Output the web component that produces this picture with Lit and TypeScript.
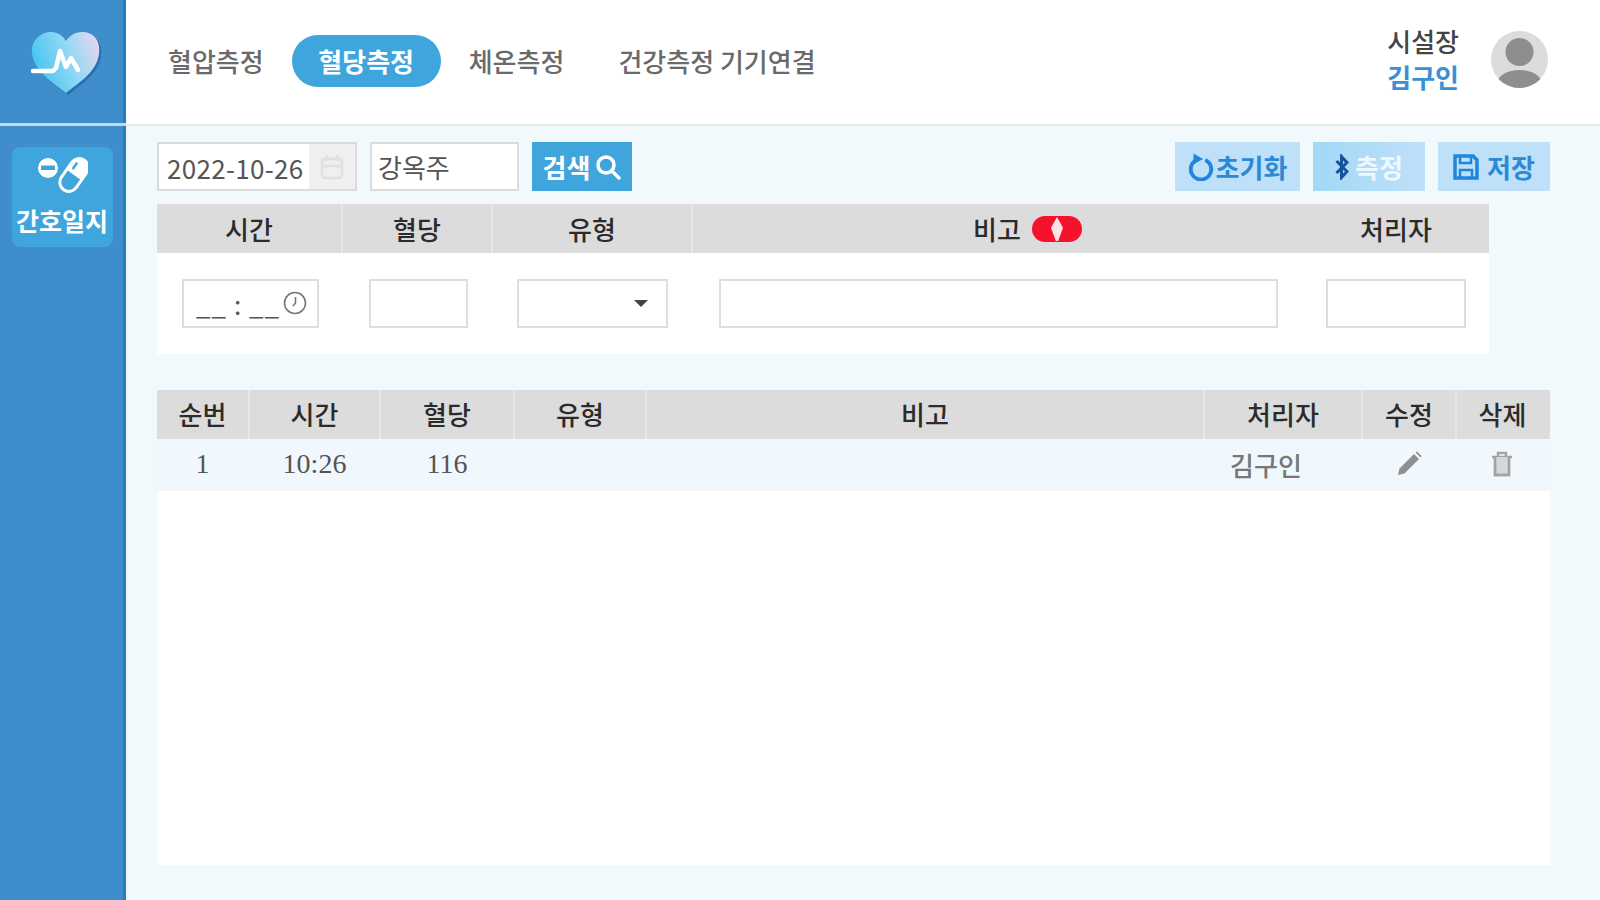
import { LitElement, html, css, svg } from "lit";
import { customElement } from "lit/decorators.js";

const formCols = ["시간", "혈당", "유형", "비고", "처리자"];
const tableCols = ["순번", "시간", "혈당", "유형", "비고", "처리자", "수정", "삭제"];

const heart = svg`<svg width="76" height="66" viewBox="0 0 76 66">
  <defs><linearGradient id="hg" x1="0" y1="0.55" x2="1" y2="0.2"><stop offset="0" stop-color="#42c4f1"/><stop offset="0.55" stop-color="#92d8f4"/><stop offset="1" stop-color="#e6d6f0"/></linearGradient></defs>
  <path d="M39 63 C28 54 7 42 5 23 C4 9 15 2 24 2 C31 2 36 6 39 11 C42 6 48 2 55 2 C66 2 74 10 72 24 C70 42 50 54 39 63Z" fill="#2a6fae" transform="translate(2 2)"/>
  <path d="M39 63 C28 54 7 42 5 23 C4 9 15 2 24 2 C31 2 36 6 39 11 C42 6 48 2 55 2 C66 2 74 10 72 24 C70 42 50 54 39 63Z" fill="url(#hg)"/>
  <path d="M6 41 H26 L29 38 L33 21 L39 37 L44 28 L51 40" fill="none" stroke="#fff" stroke-width="4.5" stroke-linejoin="round" stroke-linecap="round"/>
</svg>`;

const pill = svg`<svg class="pillico" width="50" height="36" viewBox="0 0 50 36">
  <circle cx="10" cy="11" r="10" fill="#fff"/>
  <rect x="3" y="8.5" width="14" height="4.5" fill="#3ea5dd"/>
  <g transform="rotate(-55 36 18)">
    <rect x="18" y="9" width="36" height="18" rx="9" fill="#3ea5dd" stroke="#fff" stroke-width="3"/>
    <path d="M36 9 H45 A9 9 0 0 1 45 27 H36Z" fill="#fff"/>
    <path d="M41 13.5 H47" stroke="#3ea5dd" stroke-width="2.5" stroke-linecap="round"/>
  </g>
</svg>`;

const calendar = svg`<svg width="24" height="26" viewBox="0 0 24 26" fill="none" stroke="#e0e0e0" stroke-width="2.5">
  <rect x="2" y="5" width="20" height="19" rx="3"/><path d="M2 12 H22 M7 1 V7 M17 1 V7"/>
</svg>`;

const search = svg`<svg width="26" height="26" viewBox="0 0 26 26" fill="none" stroke="#fff" stroke-width="3.5">
  <circle cx="11" cy="11" r="8"/><path d="M17 17 L24 24" stroke-linecap="round"/>
</svg>`;

const reset = svg`<svg width="26" height="28" viewBox="0 0 24 26" fill="none" stroke="#1e86dc" stroke-width="3.6">
  <path d="M16 6.5 A9.5 9.5 0 1 1 8 6.5"/><path d="M5 0.5 L14 5.5 L5 10.5Z" fill="#1e86dc" stroke="none"/>
</svg>`;

const bluetooth = svg`<svg width="14" height="26" viewBox="0 0 14 26" fill="none" stroke="#14539a" stroke-width="3">
  <path d="M1.5 7 L12 17.5 L6.5 23.5 V2.5 L12 8.5 L1.5 19"/>
</svg>`;

const save = svg`<svg width="26" height="26" viewBox="0 0 26 26" fill="none" stroke="#1e86dc" stroke-width="3.5">
  <path d="M2 2 H20 L24 6 V24 H2Z"/><path d="M7 2 V9 H18 V2 M7 24 V16 H19 V24" stroke-width="2.5"/>
</svg>`;

const clock = svg`<svg width="24" height="24" viewBox="0 0 24 24" fill="none" stroke="#777" stroke-width="1.6">
  <circle cx="12" cy="12" r="10.5"/><path d="M12.5 6 V12 L10 15"/>
</svg>`;

const pencil = svg`<svg width="26" height="26" viewBox="0 0 26 26" fill="#8f8f8f">
  <path d="M2 24 L3.5 17.5 L18 3 L23 8 L8.5 22.5Z"/><path d="M19.5 1.5 L21 0.5 L25.5 5 L24.5 6.5Z"/>
</svg>`;

const trash = svg`<svg width="22" height="26" viewBox="0 0 22 26" fill="none" stroke="#a2a2a2" stroke-width="2.4">
  <path d="M1 6 H21 M7 6 V2 H15 V6"/><path d="M4 6 V24 H18 V6" fill="#d4d8da"/><path d="M4 6 V24 H18 V6"/>
</svg>`;

@customElement("app-root")
export class AppRoot extends LitElement {
  static styles = css`
    :host { display: block; width: 1600px; height: 900px; overflow: hidden; font-family: "Noto Sans CJK KR", "Noto Sans", sans-serif; color: #555; background: #f2f9fc; }
    * { box-sizing: border-box; }
    .app { display: grid; grid-template-columns: 126px 1fr; height: 900px; }
    .side { background: #3f8dcb; border-right: 3px solid #217fc4; display: flex; flex-direction: column; }
    .logo { display: flex; align-items: center; justify-content: center; padding: 3px 0 0 4px; border-bottom: 3px solid #c4d9e8; margin-right: -3px; height: 126px; }
    .menu { margin: 21px 10px 0 12px; height: 100px; background: #3ea5dd; border-radius: 8px; color: #fff; display: flex; flex-direction: column; align-items: center; font-size: 25px; font-weight: 700; line-height: 32px; padding-top: 10px; gap: 11px; }
    .menu span { margin-left: -1px; }
    .main { display: flex; flex-direction: column; min-width: 0; }
    .top { height: 126px; background: #fff; border-bottom: 2px solid #e2e8ec; display: flex; align-items: center; padding: 0 50px 6px 42px; }
    .nav { display: flex; align-items: center; gap: 28px; font-size: 26px; color: #6a6a6a; font-weight: 500; flex: 1; margin-top: 3px; }
    .nav .pill { background: #3ea5dd; color: #fff; border-radius: 26px; height: 52px; width: 149px; display: flex; align-items: center; justify-content: center; font-weight: 700; }
    .nav .wide { margin-left: 26px; }
    .user { display: flex; flex-direction: column; align-items: center; font-size: 26px; line-height: 36px; color: #444; font-weight: 500; margin-right: 32px; margin-bottom: 1px; }
    .user b { color: #3a90d2; font-weight: 700; }
    .avatar { width: 57px; height: 57px; margin-right: 2px; }
    .content { flex: 1; padding: 16px 50px 35px 31px; display: flex; flex-direction: column; }
    .tools { height: 49px; display: flex; gap: 13px; margin-bottom: 13px; }
    .field { border: 2px solid #d8dcdf; background: #fff; height: 49px; font-size: 26px; color: #555; display: flex; align-items: center; }
    .date { width: 200px; padding-left: 8px; justify-content: space-between; padding-right: 0; }
    .date span { letter-spacing: 0.3px; margin-top: 2px; }
    .date i { width: 46px; height: 45px; background: #efefef; display: flex; align-items: center; justify-content: center; }
    .name { width: 149px; padding-left: 6px; }
    .btn { height: 49px; font-size: 26px; font-weight: 700; display: flex; align-items: center; justify-content: center; gap: 2px; }
    .go { width: 100px; background: #3ea5dd; color: #fff; gap: 5px; }
    .spacer { flex: 1; }
    .soft { background: #bfe0f9; color: #2a8ad6; }
    .w125 { width: 125px; }
    .w112 { width: 112px; gap: 6px; background: linear-gradient(90deg, #a3d8f6, #bfe0f9); color: #eef8ff; }
    .w112b { width: 112px; gap: 8px; }
    .head { display: grid; height: 49px; background: #dcdcdc; gap: 2px; font-size: 26px; font-weight: 500; color: #2b2b2b; }
    .head > div { display: flex; align-items: center; justify-content: center; position: relative; box-shadow: 2px 0 0 #e6e8e8; }
    .head > div:last-child { box-shadow: none; }
    .fhead, .fbody { grid-template-columns: 184px 148px 198px 608px 186px; width: 1332px; }
    .fhead > div:nth-child(4) { box-shadow: none; }
    .fbody { display: grid; gap: 2px; height: 101px; background: #fff; align-items: center; justify-items: center; padding-bottom: 1px; }
    .badge { position: absolute; left: 339px; top: 12px; width: 50px; height: 26px; border-radius: 13px; background: #f5122c; display: flex; align-items: center; justify-content: center; }
    .badge i { width: 12px; height: 24px; background: #fbe4e4; clip-path: polygon(50% 0, 100% 45%, 60% 100%, 40% 100%, 0 45%); }
    .box { height: 49px; border: 2px solid #dedede; background: #fff; display: flex; align-items: center; position: relative; font-size: 26px; color: #555; }
    .time { width: 137px; margin-left: 3px; padding-left: 12px; letter-spacing: 1px; justify-content: space-between; padding-right: 10px; }
    .b99 { width: 99px; margin-left: 2px; }
    .b151 { width: 151px; justify-content: flex-end; padding-right: 18px; }
    .caret { border: 7px solid transparent; border-top: 7px solid #444; border-bottom: 0; }
    .b557 { width: 559px; margin-left: 2px; }
    .b139 { width: 140px; margin-left: -1px; }
    .list { margin-top: 36px; flex: 1; background: #fff; display: flex; flex-direction: column; }
    .thead, .trow { grid-template-columns: 91px 129px 132px 130px 556px 156px 92px 91px; }
    .thead > div { padding-bottom: 3px; }
    .trow { display: grid; gap: 2px; height: 52px; background: #f0f8fe; font-size: 26px; color: #666; align-items: center; justify-items: center; padding-bottom: 2px; }
    .num { font-family: "Liberation Serif", serif; font-size: 28px; color: #555; }
    .who { margin-left: -34px; font-size: 26px; font-weight: 500; color: #777; }
    .ico { display: flex; }
    .ico.t { margin-left: -2px; }
  `;

  render() {
    return html`<div class="app">
      <aside class="side">
        <div class="logo">${heart}</div>
        <div class="menu">${pill}<span>간호일지</span></div>
      </aside>
      <div class="main">
        <header class="top">
          <nav class="nav">
            <span>혈압측정</span><span class="pill">혈당측정</span><span>체온측정</span><span class="wide">건강측정 기기연결</span>
          </nav>
          <div class="user"><span>시설장</span><b>김구인</b></div>
          <svg class="avatar" viewBox="0 0 57 57">
            <defs><clipPath id="av"><circle cx="28.5" cy="28.5" r="28.5"/></clipPath></defs>
            <circle cx="28.5" cy="28.5" r="28.5" fill="#dcdcdc"/>
            <g clip-path="url(#av)" fill="#8e8e8e">
              <circle cx="28.5" cy="21" r="14"/>
              <ellipse cx="28.5" cy="52" rx="22" ry="13"/>
            </g>
          </svg>
        </header>
        <main class="content">
          <div class="tools">
            <div class="field date"><span>2022-10-26</span><i>${calendar}</i></div>
            <div class="field name">강옥주</div>
            <div class="btn go">검색${search}</div>
            <div class="spacer"></div>
            <div class="btn soft w125">${reset}초기화</div>
            <div class="btn w112">${bluetooth}측정</div>
            <div class="btn soft w112b">${save}저장</div>
          </div>
          <div class="head fhead">
            ${formCols.map((c) => html`<div>${c}${c === "비고" ? html`<span class="badge"><i></i></span>` : ""}</div>`)}
          </div>
          <div class="fbody">
            <div class="box time"><span>__ : __</span>${clock}</div>
            <div class="box b99"></div>
            <div class="box b151"><i class="caret"></i></div>
            <div class="box b557"></div>
            <div class="box b139"></div>
          </div>
          <section class="list">
            <div class="head thead">${tableCols.map((c) => html`<div>${c}</div>`)}</div>
            <div class="trow">
              <span class="num">1</span><span class="num">10:26</span><span class="num">116</span><span></span><span></span>
              <span class="who">김구인</span>
              <span class="ico p">${pencil}</span><span class="ico t">${trash}</span>
            </div>
          </section>
        </main>
      </div>
    </div>`;
  }
}
